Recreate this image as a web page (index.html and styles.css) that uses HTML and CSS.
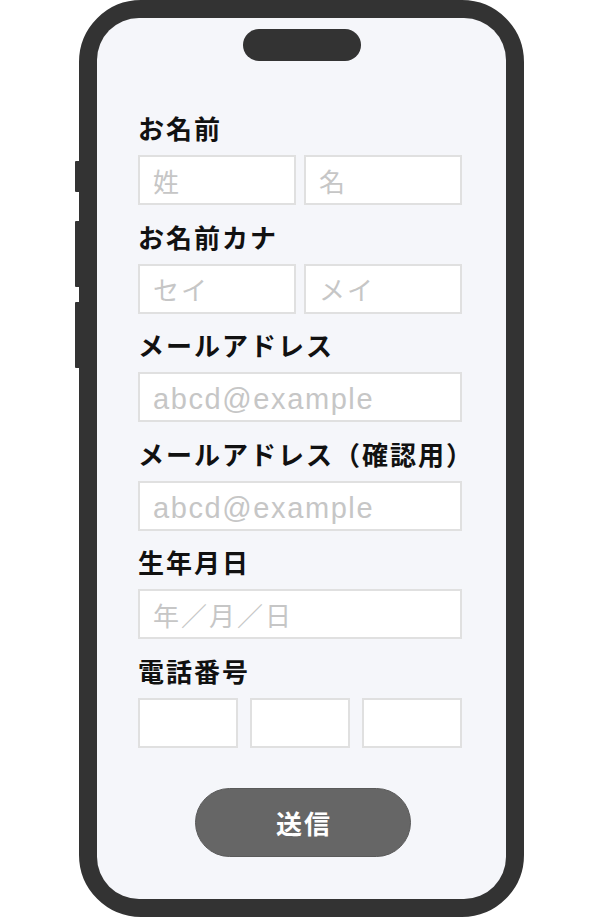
FILE: index.html
```html
<!DOCTYPE html>
<html lang="ja">
<head>
<meta charset="utf-8">
<title>フォーム</title>
<link rel="stylesheet" href="styles.css">
</head>
<body>
<div class="phone">
  <span class="side-btn side-btn--1"></span>
  <span class="side-btn side-btn--2"></span>
  <span class="side-btn side-btn--3"></span>
  <div class="screen">
    <div class="notch"></div>
    <form class="form">
      <div class="field">
        <label class="label">お名前</label>
        <div class="row row--2">
          <input class="input" placeholder="姓">
          <input class="input" placeholder="名">
        </div>
      </div>
      <div class="field">
        <label class="label">お名前カナ</label>
        <div class="row row--2">
          <input class="input" placeholder="セイ">
          <input class="input" placeholder="メイ">
        </div>
      </div>
      <div class="field">
        <label class="label">メールアドレス</label>
        <input class="input input--latin" placeholder="abcd@example">
      </div>
      <div class="field">
        <label class="label">メールアドレス（確認用）</label>
        <input class="input input--latin" placeholder="abcd@example">
      </div>
      <div class="field">
        <label class="label">生年月日</label>
        <input class="input" placeholder="年／月／日">
      </div>
      <div class="field">
        <label class="label">電話番号</label>
        <div class="row row--3">
          <input class="input">
          <input class="input">
          <input class="input">
        </div>
      </div>
      <button type="button" class="submit">送信</button>
    </form>
  </div>
</div>
</body>
</html>
```
FILE: styles.css
```css
* { box-sizing: border-box; }

html, body {
  margin: 0;
  padding: 0;
  background: #ffffff;
}

body {
  width: 600px;
  height: 918px;
  overflow: hidden;
  font-family: "Noto Sans CJK JP", "Noto Sans", sans-serif;
}

.phone {
  position: relative;
  margin-left: 79px;
  width: 445px;
  height: 917px;
  border: 18px solid #333333;
  border-radius: 62px;
  background: #333333;
}

.side-btn {
  position: absolute;
  left: -22px;
  width: 5px;
  background: #333333;
  border-radius: 1px 0 0 1px;
}
.side-btn--1 { top: 143px; height: 31px; }
.side-btn--2 { top: 203px; height: 66px; }
.side-btn--3 { top: 284px; height: 66px; }

.screen {
  position: relative;
  width: 100%;
  height: 100%;
  background: #f5f6fa;
  border-radius: 42px;
  overflow: hidden;
}

.notch {
  position: absolute;
  top: 11px;
  left: 146px;
  width: 118px;
  height: 32px;
  border-radius: 16px;
  background: #333333;
}

.form {
  display: flex;
  flex-direction: column;
  gap: 16.6px;
  padding: 95px 0 0 41px;
  width: 365px;
}

.field {
  display: flex;
  flex-direction: column;
  gap: 12px;
}

.label {
  display: block;
  height: 30px;
  line-height: 30px;
  font-size: 26px;
  font-weight: 700;
  letter-spacing: 2px;
  color: #111111;
  white-space: nowrap;
}

.row {
  display: grid;
}
.row--2 {
  grid-template-columns: 1fr 1fr;
  gap: 8px;
}
.row--3 {
  grid-template-columns: 1fr 1fr 1fr;
  gap: 12px;
}

.input {
  display: block;
  width: 100%;
  height: 50px;
  margin: 0;
  padding: 0 0 0 13px;
  border: 2px solid #e0e0e0;
  border-radius: 0;
  background: #ffffff;
  font-family: "Noto Sans CJK JP", "Noto Sans", sans-serif;
  font-size: 26px;
  font-weight: 400;
  letter-spacing: 2px;
  color: #333333;
  outline: none;
}
.input::placeholder {
  color: #c6c6c6;
  opacity: 1;
}
.input--latin {
  font-family: "Liberation Sans", Arial, sans-serif;
  font-size: 29px;
  letter-spacing: 1.6px;
  padding: 5px 0 0 13px;
}

.submit {
  margin: 23.4px 0 0 57px;
  width: 216px;
  height: 69px;
  border: 1px solid #5a5a5a;
  border-radius: 35px;
  background: #666666;
  color: #ffffff;
  font-family: "Noto Sans CJK JP", "Noto Sans", sans-serif;
  font-size: 26px;
  font-weight: 700;
  letter-spacing: 2px;
  padding: 0 0 0 2px;
  cursor: pointer;
}
```
